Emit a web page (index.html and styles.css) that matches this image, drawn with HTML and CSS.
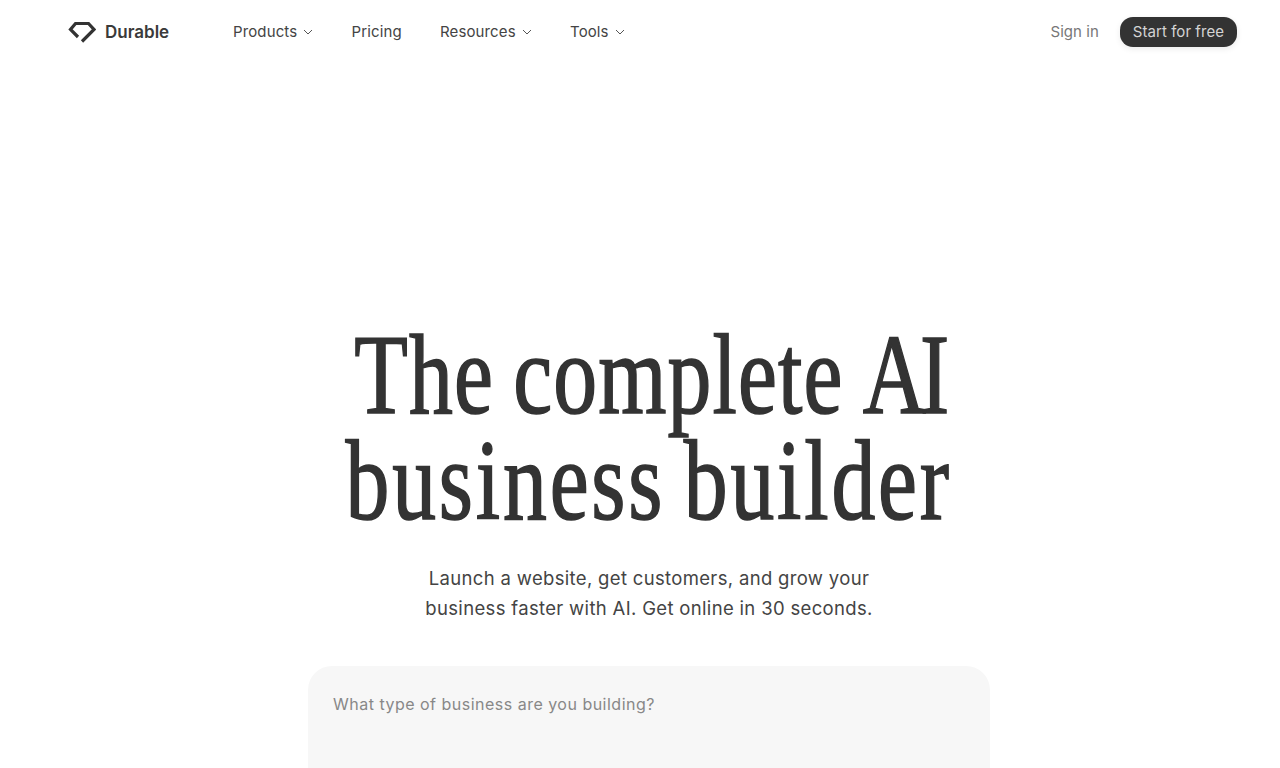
FILE: index.html
```html
<!DOCTYPE html>
<html lang="en">
<head>
<meta charset="utf-8">
<title>Durable</title>
<link rel="stylesheet" href="styles.css">
</head>
<body>
<header class="nav">
  <a class="brand" href="#">
    <svg class="logo" width="28" height="22" viewBox="0 0 28 22" fill="none"><path d="M10 16 L2.500 8.500 L7.500 2.500 H20.500 L26 8.500 L14 20.500" stroke="#333" stroke-width="3.200"/></svg>
    <span>Durable</span>
  </a>
  <nav class="menu">
    <a href="#">Products <svg class="chev" width="10" height="6" viewBox="0 0 10 6" fill="none"><path d="M1 1l4 4 4-4" stroke="#555" stroke-width="1"/></svg></a>
    <a href="#">Pricing</a>
    <a href="#">Resources <svg class="chev" width="10" height="6" viewBox="0 0 10 6" fill="none"><path d="M1 1l4 4 4-4" stroke="#555" stroke-width="1"/></svg></a>
    <a href="#">Tools <svg class="chev" width="10" height="6" viewBox="0 0 10 6" fill="none"><path d="M1 1l4 4 4-4" stroke="#555" stroke-width="1"/></svg></a>
  </nav>
  <div class="actions">
    <a class="signin" href="#">Sign in</a>
    <a class="cta" href="#">Start for free</a>
  </div>
</header>
<main class="hero">
  <h1><span class="l1">The complete <span class="ai">AI</span></span><span class="l2">business builder</span></h1>
  <p class="sub">Launch a website, get customers, and grow your<br>business faster with AI. Get online in 30 seconds.</p>
  <div class="prompt">What type of business are you building?</div>
</main>
</body>
</html>
```
FILE: styles.css
```css
* { box-sizing: border-box; }
html, body { margin: 0; height: 100%; overflow: hidden; background: #fff; }
body { font-family: Inter, "Liberation Sans", sans-serif; color: #333; }
a { color: inherit; text-decoration: none; }
.nav { display: flex; align-items: center; height: 63px; padding: 0 43px 0 68px; }
.brand { display: flex; align-items: center; gap: 9px; font-size: 17px; font-weight: 600; width: 165px; color: #3a3a3a; }
.logo { display: block; }
.menu { display: flex; gap: 38.300px; font-size: 15px; color: #444; letter-spacing: .12px; }
.menu a { display: flex; align-items: center; gap: 6px; }
.actions { margin-left: auto; display: flex; align-items: center; gap: 21px; font-size: 15px; letter-spacing: .05px; }
.signin { color: #777; }
.cta { background: #333; color: #d4d4d4; border-radius: 13px; padding: 5px 13px; height: 30px; box-shadow: 0 2px 6px rgba(0,0,0,.08); }
.hero { display: flex; flex-direction: column; align-items: center; padding: 0 0 0 18px; margin-top: 259px; }
h1 { margin: 0; font-family: "Liberation Serif", serif; font-weight: 400; font-size: 114px; line-height: 106px; text-align: center; color: #333; white-space: nowrap; transform: scaleX(.77); -webkit-text-stroke: 1.600px #333; }
h1 > span { display: block; }
.l1 { letter-spacing: 1.400px; word-spacing: -5px; }
.ai { letter-spacing: -8px; }
.l2 { letter-spacing: 3.600px; word-spacing: -8px; }
.sub { margin: 29px 0 0; font-size: 18.500px; line-height: 30px; text-align: center; color: #444; letter-spacing: .33px; }
.prompt { margin-top: 43px; width: 682px; height: 200px; background: #f7f7f7; border-radius: 24px; padding: 28px 25px; font-size: 16px; color: #888; letter-spacing: .49px; }
```
